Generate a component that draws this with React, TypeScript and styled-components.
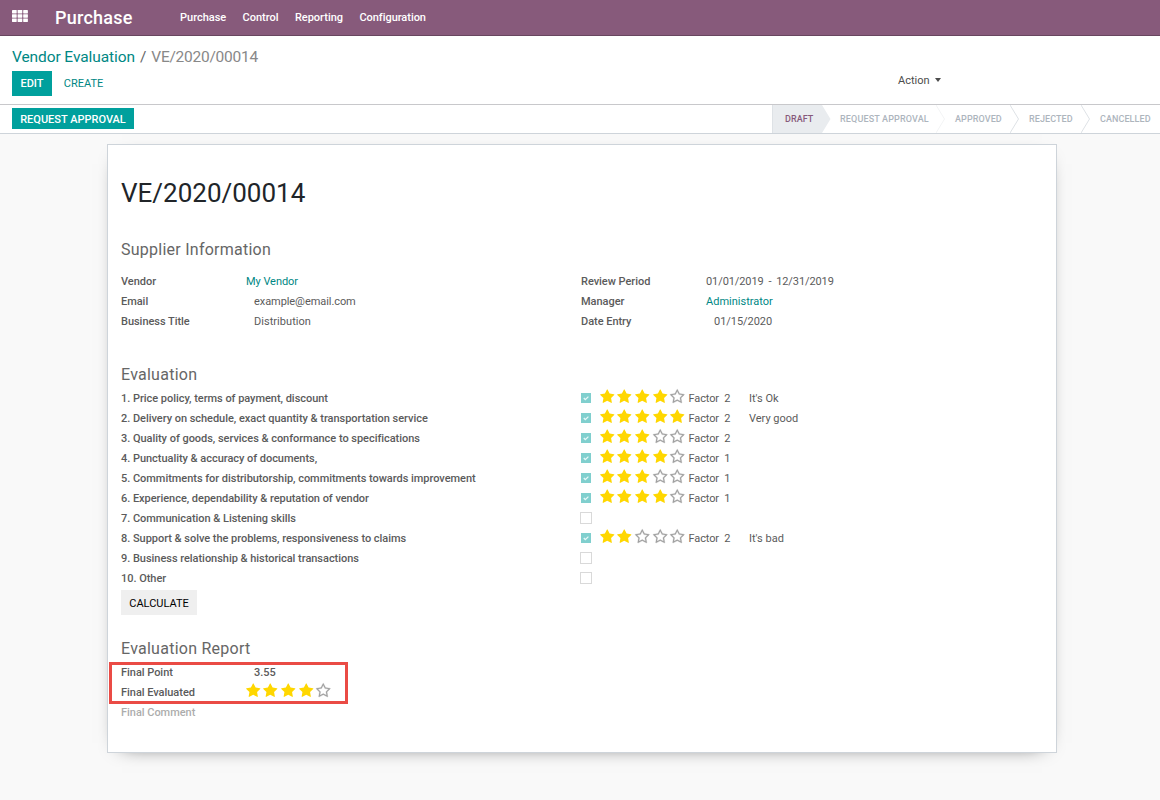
import React from "react";
import styled, { createGlobalStyle } from "styled-components";

const Global = createGlobalStyle`
  * { box-sizing: border-box; }
  body { margin: 0; background: #f9f9f9; font-family: Roboto, "Liberation Sans", sans-serif; font-size: 11px; color: #5b5b5b; }
`;

const Page = styled.div`
  width: 1160px;
  height: 800px;
  overflow: hidden;
  background: #f9f9f9;
  white-space: nowrap;
`;

const Label = styled.span<{ $ls?: number }>`
  letter-spacing: ${(p) => p.$ls ?? 0}px;
`;

const Navbar = styled.header`
  display: flex;
  height: 36px;
  background: #875a7b;
  border-bottom: 1px solid #68465f;
  color: #fff;
  padding-left: 12px;
`;

const AppsIcon = styled.svg`
  width: 16px;
  height: 12px;
  margin-top: 10px;
  flex: none;
`;

const Brand = styled.div`
  width: 125px;
  margin-left: 27px;
  font-size: 18px;
  font-weight: 500;
  line-height: 35px;
`;

const Menu = styled.nav`
  display: flex;
  gap: 16.3px;
  font-size: 11px;
  font-weight: 500;
  line-height: 36px;
`;

const ControlPanel = styled.section`
  height: 69px;
  background: #fff;
  border-bottom: 1px solid #c8c8cb;
  padding: 10px 12px 0;
`;

const Breadcrumb = styled.div`
  display: flex;
  gap: 5px;
  height: 25px;
  font-size: 15.5px;
  line-height: 22px;
  color: #666;
`;

const Link = styled.a`
  color: #008784;
  letter-spacing: -0.09px;
`;

const Muted = styled.span`
  color: #888;
  letter-spacing: -0.25px;
`;

const ControlRow = styled.div`
  display: flex;
  height: 25px;
`;

const Button = styled.button<{ $kind: "primary" | "link" | "plain"; $w: number; $h: number; $drop?: number }>`
  width: ${(p) => p.$w}px;
  height: ${(p) => p.$h}px;
  padding: ${(p) => p.$drop ?? 0}px 0 0;
  border: 0;
  display: flex;
  align-items: center;
  justify-content: center;
  font-family: inherit;
  font-size: 11px;
  font-weight: ${(p) => (p.$kind === "primary" ? 500 : 400)};
  background: ${(p) => ({ primary: "#00a09d", link: "transparent", plain: "#efefef" })[p.$kind]};
  color: ${(p) => ({ primary: "#fff", link: "#008784", plain: "#000" })[p.$kind]};
`;

const ActionMenu = styled.div`
  display: flex;
  gap: 5px;
  margin-left: 783px;
  height: 18px;
  line-height: 18px;
  color: #4c4c4c;
  align-items: center;
  span { padding-top: 1px; }
`;

const Caret = styled.i`
  border: 3.5px solid transparent;
  border-top: 4px solid #4c4c4c;
  border-bottom: 0;
`;

const StatusBar = styled.section`
  display: flex;
  justify-content: space-between;
  height: 29px;
  padding: 3px 0 0 12px;
  background: #fff;
  border-bottom: 1px solid #ced4da;
`;

const Stages = styled.div`
  display: flex;
  height: 28px;
  margin-top: -3px;
  border-left: 1px solid #dee2e6;
`;

const Stage = styled.div<{ $w: number; $pad: number; $active?: boolean }>`
  display: flex;
  width: ${(p) => p.$w}px;
  padding-left: ${(p) => p.$pad}px;
  justify-content: space-between;
  line-height: 28px;
  font-size: 9px;
  font-weight: 500;
  color: ${(p) => (p.$active ? "#875a7b" : "#adb5bd")};
  background: ${(p) => (p.$active ? "#e9ecef" : "#fff")};
`;

const Chevron = styled.svg`
  width: 9px;
  height: 28px;
  flex: none;
`;

const Sheet = styled.main`
  width: 950px;
  height: 609px;
  margin: 10px 0 0 107px;
  padding: 27px 13px 0;
  background: #fff;
  border: 1px solid #ced4da;
  box-shadow: 0 5px 20px -15px #000;
`;

const Title = styled.h1`
  margin: 0;
  height: 67px;
  font-size: 26px;
  font-weight: 400;
  line-height: 42px;
  color: #212529;
`;

const Heading = styled.h2<{ $h: number }>`
  margin: 0;
  height: ${(p) => p.$h}px;
  font-size: 16px;
  font-weight: 400;
  line-height: 22px;
  letter-spacing: 0.25px;
  color: #666;
`;

const Columns = styled.div`
  display: grid;
  grid-template-columns: 460px 1fr;
  height: 93px;
`;

const Field = styled.div<{ $dim?: boolean }>`
  display: grid;
  grid-template-columns: 125px 1fr;
  height: 20px;
  line-height: 22px;
  opacity: ${(p) => (p.$dim ? 0.5 : 1)};
`;

const Name = styled.span`
  font-weight: 500;
  color: #5b5b5b;
  letter-spacing: -0.035px;
`;

const Value = styled.span<{ $indent?: boolean; $strong?: boolean; $link?: boolean; $ls?: number }>`
  padding-left: ${(p) => (p.$indent ? 8 : 0)}px;
  font-weight: ${(p) => (p.$strong ? 500 : 400)};
  color: ${(p) => (p.$link ? "#008784" : "#5b5b5b")};
  letter-spacing: ${(p) => p.$ls ?? 0}px;
  white-space: pre;
`;

const Criterion = styled.div`
  display: grid;
  grid-template-columns: 459px 19.5px 89px 60.5px 1fr;
  height: 20px;
  line-height: 22px;
`;

const Box = styled.span<{ $on: boolean }>`
  display: block;
  width: ${(p) => (p.$on ? 10 : 12)}px;
  height: ${(p) => (p.$on ? 10 : 12)}px;
  margin: ${(p) => (p.$on ? "5px 0 0 1px" : "4px 0 0")};
  background: ${(p) => (p.$on ? "#80cfce" : "#fff")};
  border: ${(p) => (p.$on ? "0" : "1px solid #d9d9d9")};
  svg { display: block; }
`;

const StarRow = styled.span<{ $shift?: number }>`
  display: flex;
  gap: 3.2px;
  padding-top: 0.5px;
  margin-left: ${(p) => p.$shift ?? 0}px;
  svg { width: 14.5px; height: 15.5px; flex: none; overflow: visible; }
`;

const Calculate = styled.div`
  height: 50px;
  padding-top: 2px;
`;

const Report = styled.div`
  position: relative;
`;

const Highlight = styled.div`
  position: absolute;
  left: -12px;
  top: 0;
  width: 239px;
  height: 42px;
  border: 3px solid #ea4b45;
`;

const STAR =
  "M1728 647q0 22-26 48l-363 354 86 500q1 7 1 20 0 21-10.5 35.5t-30.5 14.5q-19 0-40-12l-449-236-449 236q-22 12-40 12-21 0-31.5-14.5t-10.5-35.5q0-6 2-20l86-500-364-354q-25-27-25-48 0-37 56-46l502-73 225-455q19-41 49-41t49 41l225 455 502 73q56 9 56 46z";
const STAR_HOLE = "M1201 1004l306-297-422-62-189-382-189 382-422 62 306 297-73 421 378-199 377 199z";

const Stars = ({ count, shift }: { count: number; shift?: number }) => (
  <StarRow $shift={shift}>
    {[0, 1, 2, 3, 4].map((i) => (
      <svg key={i} viewBox="54 0 1684 1796">
        <path
          d={i < count ? STAR : STAR_HOLE + STAR}
          fillRule="evenodd"
          fill={i < count ? "#ffd700" : "#a0a0a0"}
          stroke={i < count ? "none" : "#a0a0a0"}
          strokeWidth="30"
        />
      </svg>
    ))}
  </StarRow>
);

const criteria: { text: string; stars?: number; factor?: number; note?: string }[] = [
  { text: "1. Price policy, terms of payment, discount", stars: 4, factor: 2, note: "It's Ok" },
  { text: "2. Delivery on schedule, exact quantity & transportation service", stars: 5, factor: 2, note: "Very good" },
  { text: "3. Quality of goods, services & conformance to specifications", stars: 3, factor: 2 },
  { text: "4. Punctuality & accuracy of documents,", stars: 4, factor: 1 },
  { text: "5. Commitments for distributorship, commitments towards improvement", stars: 3, factor: 1 },
  { text: "6. Experience, dependability & reputation of vendor", stars: 4, factor: 1 },
  { text: "7. Communication & Listening skills" },
  { text: "8. Support & solve the problems, responsiveness to claims", stars: 2, factor: 2, note: "It's bad" },
  { text: "9. Business relationship & historical transactions" },
  { text: "10. Other" },
];

const stages = [
  { text: "DRAFT", w: 58, pad: 12, ls: 0.05, edge: "active" },
  { text: "REQUEST APPROVAL", w: 114, pad: 9, ls: 0.15, edge: "faint" },
  { text: "APPROVED", w: 74, pad: 10, ls: 0.1, edge: "line" },
  { text: "REJECTED", w: 71, pad: 10, ls: 0.08, edge: "line" },
  { text: "CANCELLED", w: 70, pad: 10, ls: 0.08, edge: "" },
];

export default function App() {
  return (
    <Page>
      <Global />
      <Navbar>
        <AppsIcon viewBox="0 0 16 12" fill="#fff">
          {[0, 1, 2].map((r) =>
            [0, 1, 2].map((c) => <rect key={`${r}${c}`} x={c * 5.6} y={r * 4.2} width="4.7" height="3.5" rx=".4" />)
          )}
        </AppsIcon>
        <Brand><Label $ls={0.25}>Purchase</Label></Brand>
        <Menu>
          <Label>Purchase</Label>
          <Label>Control</Label>
          <Label>Reporting</Label>
          <Label $ls={-0.04}>Configuration</Label>
        </Menu>
      </Navbar>
      <ControlPanel>
        <Breadcrumb>
          <Link>Vendor Evaluation</Link>
          <span>/</span>
          <Muted>VE/2020/00014</Muted>
        </Breadcrumb>
        <ControlRow>
          <Button $kind="primary" $w={40} $h={25}>EDIT</Button>
          <Button $kind="link" $w={63} $h={25}>CREATE</Button>
          <ActionMenu>
            <Label>Action</Label>
            <Caret />
          </ActionMenu>
        </ControlRow>
      </ControlPanel>
      <StatusBar>
        <Button $kind="primary" $w={122} $h={21} $drop={2}>REQUEST APPROVAL</Button>
        <Stages>
          {stages.map((s) => (
            <Stage key={s.text} $w={s.w} $pad={s.pad} $active={s.edge === "active"}>
              <Label $ls={s.ls}>{s.text}</Label>
              {s.edge && (
                <Chevron viewBox="0 0 9 28">
                  {s.edge === "active" && <path d="M0 0H9V28H0L8.5 14Z" fill="#fff" />}
                  {s.edge !== "active" && (
                    <path d="M0 0L8.5 14L0 28" fill="none" stroke={s.edge === "line" ? "#dee2e6" : "#f3f4f5"} />
                  )}
                </Chevron>
              )}
            </Stage>
          ))}
        </Stages>
      </StatusBar>
      <Sheet>
        <Title>VE/2020/00014</Title>
        <Heading $h={32}>Supplier Information</Heading>
        <Columns>
          <div>
            <Field><Name>Vendor</Name><Value $link $ls={-0.05}>My Vendor</Value></Field>
            <Field><Name>Email</Name><Value $indent $ls={-0.07}>example@email.com</Value></Field>
            <Field><Name>Business Title</Name><Value $indent $ls={0.04}>Distribution</Value></Field>
          </div>
          <div>
            <Field><Name>Review Period</Name><Value $ls={-0.09}>{"01/01/2019 \u2009-\u2009 12/31/2019"}</Value></Field>
            <Field><Name>Manager</Name><Value $link>Administrator</Value></Field>
            <Field><Name>Date Entry</Name><Value $indent $ls={-0.05}>01/15/2020</Value></Field>
          </div>
        </Columns>
        <Heading $h={24}>Evaluation</Heading>
        {criteria.map((c) => (
          <Criterion key={c.text}>
            <Name>{c.text}</Name>
            <Box $on={!!c.stars}>
              {c.stars && (
                <svg width="10" height="10" viewBox="0 0 10 10">
                  <path d="M2.8 5L4.3 6.6L7.4 3.6" stroke="#e8f7f7" strokeWidth="1.3" fill="none" />
                </svg>
              )}
            </Box>
            {c.stars && <Stars count={c.stars} />}
            {c.factor && <Value $ls={-0.12}>{`Factor  ${c.factor}`}</Value>}
            {c.note && <Value>{c.note}</Value>}
          </Criterion>
        ))}
        <Calculate>
          <Button $kind="plain" $w={76} $h={25} $drop={2}>CALCULATE</Button>
        </Calculate>
        <Heading $h={24}>Evaluation Report</Heading>
        <Report>
          <Field><Name>Final Point</Name><Value $indent $strong>3.55</Value></Field>
          <Field><Name>Final Evaluated</Name><Stars count={4} shift={-0.5} /></Field>
          <Field $dim><Name>Final Comment</Name></Field>
          <Highlight />
        </Report>
      </Sheet>
    </Page>
  );
}
